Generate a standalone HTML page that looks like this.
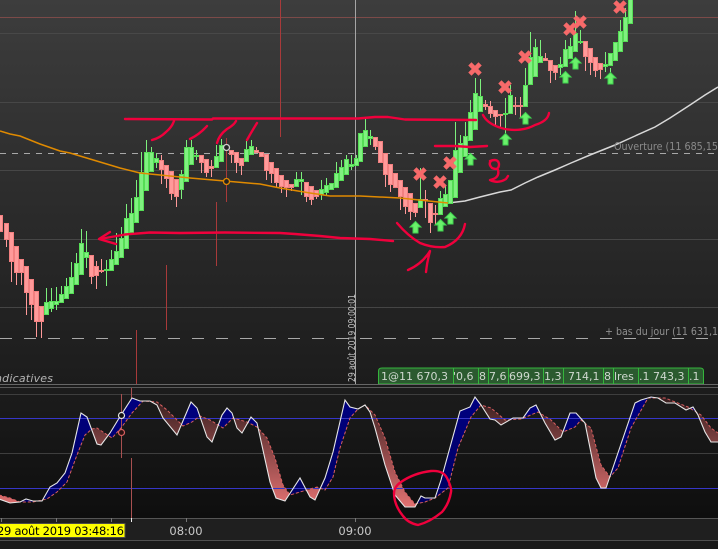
<!DOCTYPE html>
<html><head><meta charset="utf-8"><style>
html,body{margin:0;padding:0;background:#1a1a1a;width:718px;height:549px;overflow:hidden}
svg{display:block}
text{font-family:"DejaVu Sans","Liberation Sans",sans-serif}
</style></head><body>
<svg width="718" height="549" viewBox="0 0 718 549" xmlns="http://www.w3.org/2000/svg">
<defs>
<linearGradient id="bg" x1="0" y1="0" x2="0" y2="1"><stop offset="0" stop-color="#3d3d3d"/><stop offset="1" stop-color="#1c1c1c"/></linearGradient>
<linearGradient id="bg2" x1="0" y1="0" x2="0" y2="1"><stop offset="0" stop-color="#1c1c1c"/><stop offset="1" stop-color="#0e0e0e"/></linearGradient>
<linearGradient id="pk" gradientUnits="userSpaceOnUse" x1="0" y1="400" x2="0" y2="505"><stop offset="0" stop-color="#3a2020"/><stop offset="1" stop-color="#e07070"/></linearGradient>
<linearGradient id="nv" gradientUnits="userSpaceOnUse" x1="0" y1="400" x2="0" y2="505"><stop offset="0" stop-color="#000080"/><stop offset="1" stop-color="#000060"/></linearGradient>
<clipPath id="ca"><path d="M-1,495L10,498L20,502L33,502L47,499L57,492L67,482L77,455L85,435L92,429L97,428L103,432L112,438L121,428L132,413L143,401L157,402L167,410L183,426L192,422L200,416L210,420L223,428L233,418L247,422L257,427L267,438L275,458L283,485L290,495L300,492L317,487L325,490L333,477L340,448L350,418L358,409L365,405L375,415L385,438L395,472L405,492L415,504L425,502L435,498L448,488L458,448L471,417L481,405L491,408L505,420L521,419L538,412L551,420L563,432L575,427L581,420L591,428L601,465L610,477L618,468L631,428L648,398L665,398L688,407L701,415L711,428L718,433L718,380L-1,380Z"/></clipPath>
<clipPath id="cb"><path d="M-1,495L10,498L20,502L33,502L47,499L57,492L67,482L77,455L85,435L92,429L97,428L103,432L112,438L121,428L132,413L143,401L157,402L167,410L183,426L192,422L200,416L210,420L223,428L233,418L247,422L257,427L267,438L275,458L283,485L290,495L300,492L317,487L325,490L333,477L340,448L350,418L358,409L365,405L375,415L385,438L395,472L405,492L415,504L425,502L435,498L448,488L458,448L471,417L481,405L491,408L505,420L521,419L538,412L551,420L563,432L575,427L581,420L591,428L601,465L610,477L618,468L631,428L648,398L665,398L688,407L701,415L711,428L718,433L718,530L-1,530Z"/></clipPath>
<path id="between" fill-rule="evenodd" d="M-1,499L10,503L20,502L26,499L33,501L42,501L50,487L57,483L65,473L72,453L81,413L87,417L97,444L101,445L110,433L121,415L132,398L140,401L150,401L157,405L163,418L177,435L191,402L197,408L207,437L212,442L222,415L227,408L232,413L237,428L242,433L251,417L257,423L270,482L276,498L285,501L300,478L310,497L315,500L325,478L333,452L345,400L350,407L358,409L365,405L370,412L375,428L385,465L395,495L405,507L415,507L421,496L425,498L435,498L441,480L460,411L470,407L475,397L481,405L490,419L495,420L501,425L513,418L523,418L530,408L536,405L545,423L555,440L561,437L570,413L576,413L585,423L596,478L601,488L606,488L635,403L641,400L651,397L658,398L666,403L675,403L686,410L693,407L698,415L705,432L711,442L718,442L718,380L-1,380Z M-1,495L10,498L20,502L33,502L47,499L57,492L67,482L77,455L85,435L92,429L97,428L103,432L112,438L121,428L132,413L143,401L157,402L167,410L183,426L192,422L200,416L210,420L223,428L233,418L247,422L257,427L267,438L275,458L283,485L290,495L300,492L317,487L325,490L333,477L340,448L350,418L358,409L365,405L375,415L385,438L395,472L405,492L415,504L425,502L435,498L448,488L458,448L471,417L481,405L491,408L505,420L521,419L538,412L551,420L563,432L575,427L581,420L591,428L601,465L610,477L618,468L631,428L648,398L665,398L688,407L701,415L711,428L718,433L718,380L-1,380Z"/>
<g id="x"><path d="M-3.5,-3.5L3.5,3.5M3.5,-3.5L-3.5,3.5" stroke="#f76a6a" stroke-width="4.6" stroke-linecap="square" fill="none"/></g>
<g id="a"><path d="M0,.5L5.5,6H2.5V12H-2.5V6H-5.5Z" fill="#6bf06b" stroke="#3fd24f" stroke-width="1"/></g>
</defs>

<rect x="0" y="0" width="718" height="385" fill="url(#bg)"/>
<!-- grid -->
<g stroke-width="1" fill="none">
<path d="M0,17.5H718" stroke="#7c4a48"/>
<path d="M0,33.5H718M0,102.5H718M0,170.5H718M0,239.5H718M0,307.5H718" stroke="#4b4b4b" opacity=".85"/>
<path d="M0,153.5H718" stroke="#a8a8a8" stroke-dasharray="6 6"/>
<path d="M0,338.5H718" stroke="#a8a8a8" stroke-dasharray="12 12"/>
<path d="M355.5,0V384" stroke="#a5a5a5"/>
<path d="M280.5,0V137M226.5,138V202M216.5,202V266M166.5,265V330M136.5,330V384" stroke="#a83a3a"/>
</g>

<!-- MA lines -->
<path d="M448,203L465,201L480,197L500,192L511,190L525,183L538,177L555,170L571,163L590,155L615,145L635,136L655,127L670,118L690,105L705,95L718,87" fill="none" stroke="#d8d8d8" stroke-width="1.5"/>

<!-- pink wicks -->
<path d="M6.5,240V247M11.5,262V282M16.5,273V285M21.5,273V285M26.5,293V315M31.5,305V320M36.5,322V337M41.5,322V338M91.5,277V284M96.5,261V289M101.5,259V273M161.5,155V184M166.5,179V188M171.5,194V200M176.5,197V207M201.5,163V173M206.5,173V177M211.5,160V177M231.5,155V163M236.5,163V173M241.5,166V175M256.5,147V153M266.5,171V180M271.5,174V183M276.5,183V187M281.5,187V193M286.5,188V197M291.5,188V191M306.5,197V202M311.5,200V205M316.5,197V199M375.5,147V150M385.5,175V187M390.5,185V192M400.5,197V210M405.5,207V214M410.5,212V220M415.5,213V217M425.5,190V218M430.5,223V233M435.5,205V225M485.5,100V110M490.5,101V118M495.5,117V127M500.5,116V128M515.5,97V115M520.5,97V117M545.5,53V61M550.5,71V83M555.5,73V80M585.5,57V71M590.5,63V75M595.5,71V77M600.5,70V79" stroke="#ff9a9a" fill="none"/>
<!-- green wicks -->
<path d="M46.5,288V302M51.5,288V312M56.5,287V310M61.5,286V294M66.5,278V286M71.5,262V277M76.5,253V263M81.5,229V243M86.5,231V268M106.5,260V286M111.5,250V259M116.5,233V251M121.5,227V238M126.5,204V218M131.5,198V213M136.5,180V197M141.5,152V172M146.5,140V152M151.5,147V152M156.5,153V168M181.5,170V199M186.5,140V147M191.5,140V147M196.5,150V160M216.5,145V156M221.5,139V145M246.5,141V149M251.5,140V146M296.5,172V179M301.5,172V195M321.5,180V200M326.5,178V195M336.5,162V173M341.5,160V167M346.5,155V159M351.5,155V170M356.5,155V158M365.5,118V130M370.5,130V145M420.5,168V199M440.5,191V198M445.5,186V194M455.5,122V150M460.5,135V143M465.5,122V136M470.5,100V112M475.5,78V93M480.5,79V96M505.5,98V133M510.5,85V95M525.5,68V85M530.5,32V57M535.5,39V47M540.5,40V56M560.5,57V75M565.5,40V49M570.5,38V46M575.5,11V33M580.5,30V44M605.5,52V72M610.5,68V72M620.5,20V31M625.5,8V17" stroke="#7df07d" fill="none"/>
<!-- pink bodies -->
<path d="M-1.5,215.5h4v16h-4zM4.5,223.5h4v16h-4zM9.5,232.5h4v29h-4zM14.5,246.5h4v26h-4zM19.5,259.5h4v13h-4zM24.5,266.5h4v26h-4zM29.5,279.5h4v25h-4zM34.5,291.5h4v30h-4zM39.5,306.5h4v15h-4zM89.5,255.5h4v21h-4zM94.5,266.5h4v9h-4zM99.5,270.5h4v1h-4zM159.5,160.5h4v9h-4zM164.5,165.5h4v13h-4zM169.5,171.5h4v22h-4zM174.5,179.5h4v17h-4zM199.5,155.5h4v7h-4zM204.5,159.5h4v13h-4zM209.5,166.5h4v2h-4zM229.5,150.5h4v4h-4zM234.5,152.5h4v10h-4zM239.5,158.5h4v7h-4zM254.5,150.5h4v2h-4zM259.5,152.5h4v4h-4zM264.5,154.5h4v16h-4zM269.5,162.5h4v11h-4zM274.5,168.5h4v14h-4zM279.5,175.5h4v11h-4zM284.5,180.5h4v7h-4zM289.5,184.5h4v3h-4zM304.5,182.5h4v14h-4zM309.5,186.5h4v13h-4zM314.5,190.5h4v6h-4zM373.5,137.5h4v9h-4zM378.5,141.5h4v21h-4zM383.5,153.5h4v21h-4zM388.5,164.5h4v20h-4zM393.5,173.5h4v14h-4zM398.5,180.5h4v16h-4zM403.5,187.5h4v19h-4zM408.5,193.5h4v18h-4zM413.5,203.5h4v9h-4zM423.5,199.5h4v1h-4zM428.5,203.5h4v19h-4zM433.5,213.5h4v1h-4zM483.5,104.5h4v2h-4zM488.5,106.5h4v7h-4zM493.5,110.5h4v6h-4zM498.5,114.5h4v1h-4zM513.5,105.5h4v1h-4zM518.5,105.5h4v1h-4zM543.5,58.5h4v2h-4zM548.5,60.5h4v10h-4zM553.5,65.5h4v7h-4zM583.5,41.5h4v15h-4zM588.5,48.5h4v14h-4zM593.5,57.5h4v13h-4zM598.5,63.5h4v6h-4z" fill="#ff9a9a" stroke="#f28080"/>
<!-- green bodies -->
<path d="M44.5,302.5h4v12h-4zM49.5,301.5h4v7h-4zM54.5,301.5h4v3h-4zM59.5,294.5h4v8h-4zM64.5,286.5h4v12h-4zM69.5,277.5h4v16h-4zM74.5,263.5h4v21h-4zM79.5,243.5h4v31h-4zM84.5,252.5h4v5h-4zM104.5,269.5h4v1h-4zM109.5,259.5h4v11h-4zM114.5,251.5h4v13h-4zM119.5,238.5h4v19h-4zM124.5,218.5h4v30h-4zM129.5,213.5h4v19h-4zM134.5,197.5h4v25h-4zM139.5,172.5h4v38h-4zM144.5,152.5h4v38h-4zM149.5,152.5h4v19h-4zM154.5,158.5h4v4h-4zM179.5,174.5h4v15h-4zM184.5,147.5h4v34h-4zM189.5,147.5h4v17h-4zM194.5,155.5h4v1h-4zM214.5,156.5h4v11h-4zM219.5,145.5h4v16h-4zM244.5,149.5h4v12h-4zM249.5,146.5h4v8h-4zM294.5,179.5h4v7h-4zM299.5,179.5h4v2h-4zM319.5,189.5h4v5h-4zM324.5,185.5h4v7h-4zM329.5,183.5h4v6h-4zM334.5,173.5h4v14h-4zM339.5,167.5h4v13h-4zM344.5,159.5h4v15h-4zM349.5,164.5h4v2h-4zM354.5,158.5h4v7h-4zM358.5,133.5h4v28h-4zM363.5,130.5h4v16h-4zM368.5,136.5h4v2h-4zM418.5,199.5h4v8h-4zM438.5,198.5h4v16h-4zM443.5,194.5h4v12h-4zM448.5,180.5h4v23h-4zM453.5,150.5h4v47h-4zM458.5,143.5h4v29h-4zM463.5,136.5h4v20h-4zM468.5,112.5h4v28h-4zM473.5,93.5h4v36h-4zM478.5,96.5h4v15h-4zM503.5,113.5h4v1h-4zM508.5,95.5h4v18h-4zM523.5,85.5h4v21h-4zM528.5,57.5h4v27h-4zM533.5,47.5h4v29h-4zM538.5,56.5h4v6h-4zM558.5,64.5h4v3h-4zM563.5,49.5h4v17h-4zM568.5,46.5h4v12h-4zM573.5,33.5h4v18h-4zM578.5,41.5h4v1h-4zM603.5,64.5h4v2h-4zM608.5,53.5h4v12h-4zM613.5,42.5h4v18h-4zM618.5,31.5h4v20h-4zM623.5,17.5h4v24h-4zM628.5,-2.5h4v26h-4z" fill="#80f080" stroke="#55dd55"/>

<!-- orange MA -->
<path d="M0,131L10,134L20,136L40,144L60,151L70,153L80,156L100,162L120,168L140,173L170,176L190,178L225,181L260,184L280,188L310,193L330,196L360,196L400,198L448,203" fill="none" stroke="#e08a00" stroke-width="1.5"/>

<!-- cursors -->
<circle cx="226.5" cy="147.5" r="3" fill="#222" stroke="#cfcfcf" stroke-width="1.3"/>
<circle cx="226.5" cy="181.5" r="3" fill="#222" stroke="#e08a00" stroke-width="1.3"/>

<!-- markers -->
<use href="#x" x="475" y="69"/><use href="#x" x="505" y="87"/><use href="#x" x="525" y="57"/><use href="#x" x="570" y="29"/><use href="#x" x="580" y="22"/><use href="#x" x="620" y="7"/><use href="#x" x="450" y="163"/><use href="#x" x="420" y="174"/><use href="#x" x="440" y="182"/>
<use href="#a" x="470.5" y="153"/><use href="#a" x="505.5" y="133"/><use href="#a" x="525.5" y="112"/><use href="#a" x="565.5" y="71"/><use href="#a" x="575.5" y="57"/><use href="#a" x="610.5" y="72"/><use href="#a" x="415.5" y="221"/><use href="#a" x="440.5" y="219"/><use href="#a" x="450.5" y="212"/>

<!-- labels -->
<text x="614" y="150" font-size="10.5" fill="#8a8a8a" textLength="104" lengthAdjust="spacingAndGlyphs">Ouverture (11 685,15</text>
<text x="605" y="335" font-size="10.5" fill="#8f8f8f" textLength="113" lengthAdjust="spacingAndGlyphs">+ bas du jour (11 631,1</text>
<text x="-5" y="382" font-size="11" font-style="italic" fill="#b5b5b5" textLength="58">ndicatives</text>
<text transform="translate(355,382) rotate(-90)" font-size="10" fill="#c0c0c0" textLength="88" lengthAdjust="spacingAndGlyphs">29 août 2019 09:00:01</text>

<!-- green tabs -->
<g font-size="11" fill="#cfd8cf" stroke="none">
<path d="M378.5,384V371Q378.5,368 382,368H700Q703.5,368 703.5,371V384Z" fill="#2b5a2f" stroke="#35b53c"/>
<path d="M453.5,368V384M478.5,368V384M488.5,368V384M508.5,368V384M543.5,368V384M563.5,368V384M603.5,368V384M613.5,368V384M638.5,368V384M688.5,368V384" stroke="#35b53c" fill="none"/>
<text x="381" y="380">1@11 670,3</text>
<text x="453" y="380">'0,6</text>
<text x="479" y="380">8</text>
<text x="489" y="380">7,6</text>
<text x="509" y="380">699,3</text>
<text x="544" y="380">1,3</text>
<text x="568" y="380">714,1</text>
<text x="604" y="380">8</text>
<text x="614" y="380">lres</text>
<text x="639" y="380">.1 743,3</text>
<text x="689" y="380">.1</text>
</g>

<!-- separators -->
<rect x="0" y="385" width="718" height="164" fill="#1b1b1b"/>
<path d="M0,384.5H718" stroke="#666"/>
<rect x="0" y="388" width="718" height="130" fill="url(#bg2)"/>
<path d="M0,387.5H718" stroke="#5a5a5a"/>
<path d="M0,394.5H718M0,453.5H718" stroke="#3e3e3e"/>

<!-- indicator fills -->
<use href="#between" fill="url(#nv)" clip-path="url(#ca)"/>
<use href="#between" fill="url(#pk)" clip-path="url(#cb)"/>
<path d="M0,418.5H718M0,488.5H718" stroke="#3636c8"/>
<path d="M121.5,394V458M131.5,388V398M131.5,458V518" stroke="#a85050" fill="none"/>
<path d="M-1,495L10,498L20,502L33,502L47,499L57,492L67,482L77,455L85,435L92,429L97,428L103,432L112,438L121,428L132,413L143,401L157,402L167,410L183,426L192,422L200,416L210,420L223,428L233,418L247,422L257,427L267,438L275,458L283,485L290,495L300,492L317,487L325,490L333,477L340,448L350,418L358,409L365,405L375,415L385,438L395,472L405,492L415,504L425,502L435,498L448,488L458,448L471,417L481,405L491,408L505,420L521,419L538,412L551,420L563,432L575,427L581,420L591,428L601,465L610,477L618,468L631,428L648,398L665,398L688,407L701,415L711,428L718,433" fill="none" stroke="#d96060" stroke-width="1" stroke-dasharray="3 2"/>
<path d="M-1,499L10,503L20,502L26,499L33,501L42,501L50,487L57,483L65,473L72,453L81,413L87,417L97,444L101,445L110,433L121,415L132,398L140,401L150,401L157,405L163,418L177,435L191,402L197,408L207,437L212,442L222,415L227,408L232,413L237,428L242,433L251,417L257,423L270,482L276,498L285,501L300,478L310,497L315,500L325,478L333,452L345,400L350,407L358,409L365,405L370,412L375,428L385,465L395,495L405,507L415,507L421,496L425,498L435,498L441,480L460,411L470,407L475,397L481,405L490,419L495,420L501,425L513,418L523,418L530,408L536,405L545,423L555,440L561,437L570,413L576,413L585,423L596,478L601,488L606,488L635,403L641,400L651,397L658,398L666,403L675,403L686,410L693,407L698,415L705,432L711,442L718,442" fill="none" stroke="#e6e6e6" stroke-width="1.1"/>
<circle cx="121.5" cy="415.5" r="3" fill="#111" stroke="#e6e6e6" stroke-width="1.2"/>
<circle cx="121.5" cy="432.5" r="3" fill="#2a1212" stroke="#d96060" stroke-width="1.2"/>

<!-- axis -->
<rect x="0" y="518" width="718" height="22" fill="#1f1f1f"/>
<path d="M0,518.5H718" stroke="#555"/>
<path d="M0,540.5H718" stroke="#4f4f4f"/>
<rect x="0" y="541" width="718" height="8" fill="#191919"/>
<path d="M1.5,518V522M56.5,518V522M111.5,518V522M186.5,518V522M355.5,518V522" stroke="#777"/>
<path d="M131.5,518V522" stroke="#eee"/>
<rect x="-1" y="523.5" width="126" height="14" fill="#ffff00" stroke="#4a4a4a"/>
<text x="-3" y="535" font-size="11.5" fill="#000" textLength="127" lengthAdjust="spacing">29 août 2019 03:48:16</text>
<text x="186" y="535" font-size="11.5" fill="#c8c8c8" text-anchor="middle">08:00</text>
<text x="355" y="535" font-size="11.5" fill="#c8c8c8" text-anchor="middle">09:00</text>

<!-- hand annotations -->
<g fill="none" stroke="#f0003c" stroke-width="2.4" stroke-linecap="round" stroke-linejoin="round">
<path d="M125,119L212,119.5L213,118.5L358,118.5L375,117L388,117L405,119.5L476,120"/>
<path d="M152,140Q160,138 166,132Q172,127 174,121M190,139Q200,134 207,126M217,143Q219,135 227,129Q234,125 236,121M247,140Q252,131 257,123"/>
<path d="M435,146L455,146L470,147L487,146"/>
<path d="M393,241L370,239L340,238L320,236L295,234L280,233L225,232.5L180,233L150,232.5L125,234.5L100,239"/>
<path d="M110,232L99,239L116,244"/>
<path d="M397,223Q408,236 420,243Q432,248 445,247Q462,240 465,224"/>
<path d="M408,270Q422,264 430,251Q427,262 426,272"/>
<path d="M483,115Q488,125 505,129Q522,132 535,125Q548,121 549,113"/>
<path d="M490,161Q498,158 499,164Q499,171 492,168Q488,164 491,161M498,170Q500,178 490,180Q498,184 506,179L508,176"/>
<path d="M394,493Q394,487 401,482Q414,473 431,471Q443,470 447,478Q452,488 451,492Q449,504 442,512Q430,522 418,525Q408,523 403,516Q394,505 394,493Z"/>
</g>
</svg>
</body></html>
